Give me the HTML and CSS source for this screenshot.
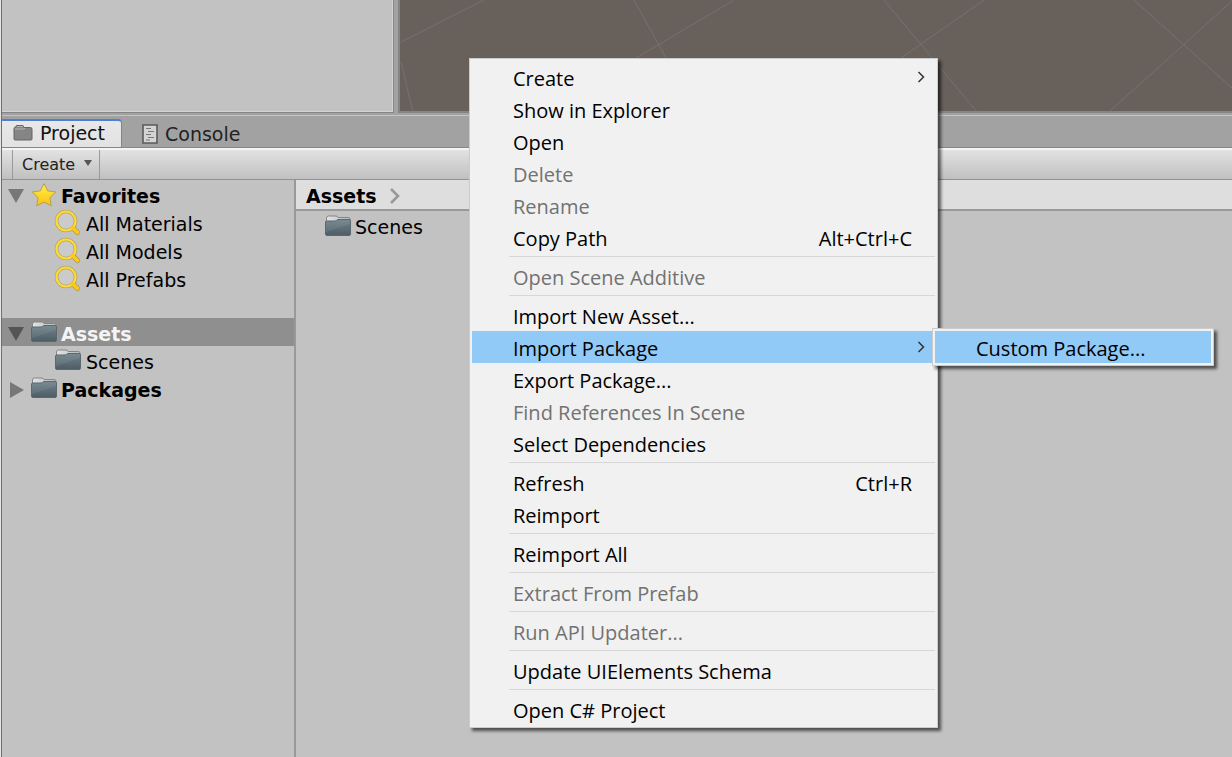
FILE: index.html
```html
<!DOCTYPE html>
<html lang="en">
<head>
<meta charset="utf-8">
<title>Project</title>
<link rel="stylesheet" href="styles.css">
</head>
<body>
<svg class="defs" aria-hidden="true">
  <defs>
    <linearGradient id="folderFill" x1="0" y1="0" x2="0" y2="1"><stop offset="0" stop-color="#6f828a"/><stop offset="1" stop-color="#4d5d65"/></linearGradient>
    <linearGradient id="gold" x1="0" y1="0" x2="0" y2="1"><stop offset="0" stop-color="#fff04a"/><stop offset="1" stop-color="#fdc010"/></linearGradient>
    <linearGradient id="flap" x1="0" y1="0" x2="1" y2="0"><stop offset="0" stop-color="#e4e4e4"/><stop offset="1" stop-color="#b4b8ba"/></linearGradient>
    <symbol id="folder" viewBox="0 0 28 24">
      <path d="M2.500 8V4Q2.500 2 4.500 2H12Q13.500 2 14 3.500H24.500Q26 3.500 26 5V8Z" fill="url(#flap)" stroke="#858585"/>
      <path d="M1.500 8Q1.500 7 3 7H11Q12.500 7 13.500 5.500H25Q26.500 5.500 26.500 7V20Q26.500 21.500 25 21.500H3Q1.500 21.500 1.500 20Z" fill="url(#folderFill)" stroke="#5c686e"/>
      <path d="M2 18L26 10V6H14L11 7.500H2Z" fill="#ffffff" opacity=".07"/>
    </symbol>
    <symbol id="search" viewBox="0 0 28 28">
      <path d="M18.500 18.500L23.500 23.500" stroke="#a8964f" stroke-width="5" stroke-linecap="round"/>
      <circle cx="12" cy="12" r="9.500" fill="#cbcbcb" stroke="#b5a468" stroke-width="3.600"/>
      <circle cx="12" cy="12" r="9.500" fill="none" stroke="#ffdc30" stroke-width="2.200"/>
      <path d="M18.500 18.500L23.500 23.500" stroke="#fdc915" stroke-width="3.800" stroke-linecap="round"/>
    </symbol>
  </defs>
</svg>
<div class="window">
  <div class="top">
    <div class="hierarchy"></div>
    <div class="scene">
      <svg class="grid" width="833" height="112" viewBox="399 0 833 112" aria-hidden="true">
        <path d="M400 42L483 0M400 62L412 112M633 0L665 58M635 58L733 0M883 0L976 112M900 58L983 0M1133 0L1232 89M1108 112L1232 0"/>
      </svg>
    </div>
  </div>
  <div class="tabs" role="tablist">
    <button class="tab active" role="tab" aria-selected="true">
      <svg width="20" height="18" viewBox="0 0 20 18" aria-hidden="true"><path d="M1 15V4.500Q1 3 2.500 3L3.500 1.500H10L11 3.500H17.500Q19 3.500 19 5V15Q19 16 18 16H2Q1 16 1 15Z" fill="#858585" stroke="#666"/><path d="M2 5H11L12 4M4 2.500H10" stroke="#b5b5b5" fill="none"/></svg>
      <span>Project</span>
    </button>
    <button class="tab" role="tab" aria-selected="false">
      <svg width="16" height="20" viewBox="0 0 16 20" aria-hidden="true"><path d="M1 1H15V19H1Z" fill="#d4d4d4" stroke="#5a5a5a" stroke-width="1.600"/><path d="M4 4.500H9M6 7.500H12M4 10.500H9M6 13.500H12M4 16H8" stroke="#777" stroke-width="1.200"/></svg>
      <span>Console</span>
    </button>
  </div>
  <div class="toolbar">
    <button class="create">Create <svg width="8" height="6" viewBox="0 0 8 6" aria-hidden="true"><path d="M0 0H8L4 6Z" fill="#555"/></svg></button>
  </div>
  <div class="main">
    <nav class="tree">
      <div class="row"><svg class="fold" viewBox="0 0 16 14"><path d="M0 0H16L8 14Z"/></svg><svg class="star" viewBox="0 0 26 26"><path d="M13 1.500L16.600 8.800L24.700 10L18.900 15.700L20.200 23.800L13 20L5.800 23.800L7.100 15.700L1.300 10L9.400 8.800Z" fill="url(#gold)" stroke="#b3a24a" stroke-linejoin="round"/></svg><b>Favorites</b></div>
      <div class="row child"><svg class="mag"><use href="#search"/></svg><span>All Materials</span></div>
      <div class="row child"><svg class="mag"><use href="#search"/></svg><span>All Models</span></div>
      <div class="row child"><svg class="mag"><use href="#search"/></svg><span>All Prefabs</span></div>
      <div class="row selected"><svg class="fold" viewBox="0 0 16 14"><path d="M0 0H16L8 14Z"/></svg><svg class="folder"><use href="#folder"/></svg><b>Assets</b></div>
      <div class="row child"><svg class="folder"><use href="#folder"/></svg><span>Scenes</span></div>
      <div class="row"><svg class="fold" viewBox="0 0 16 16"><path d="M2 0L16 8L2 16Z"/></svg><svg class="folder"><use href="#folder"/></svg><b>Packages</b></div>
    </nav>
    <section class="content">
      <div class="crumbs"><b>Assets</b><svg width="12" height="16" viewBox="0 0 12 16" aria-hidden="true"><path d="M2 1L9 8L2 15" fill="none" stroke="#999" stroke-width="2.600"/></svg></div>
      <div class="row asset"><svg class="folder"><use href="#folder"/></svg><span>Scenes</span></div>
    </section>
  </div>
</div>

<div class="menu context" role="menu">
  <button class="item" role="menuitem">Create<svg class="arrow" viewBox="0 0 8 12"><path d="M1.500 1L6.500 6L1.500 11"/></svg></button>
  <button class="item" role="menuitem">Show in Explorer</button>
  <button class="item" role="menuitem">Open</button>
  <button class="item" role="menuitem" disabled>Delete</button>
  <button class="item" role="menuitem" disabled>Rename</button>
  <button class="item" role="menuitem">Copy Path<span class="key">Alt+Ctrl+C</span></button>
  <hr>
  <button class="item" role="menuitem" disabled>Open Scene Additive</button>
  <hr>
  <button class="item" role="menuitem">Import New Asset...</button>
  <button class="item hot" role="menuitem">Import Package<svg class="arrow" viewBox="0 0 8 12"><path d="M1.500 1L6.500 6L1.500 11"/></svg></button>
  <button class="item" role="menuitem">Export Package...</button>
  <button class="item" role="menuitem" disabled>Find References In Scene</button>
  <button class="item" role="menuitem">Select Dependencies</button>
  <hr>
  <button class="item" role="menuitem">Refresh<span class="key">Ctrl+R</span></button>
  <button class="item" role="menuitem">Reimport</button>
  <hr>
  <button class="item" role="menuitem">Reimport All</button>
  <hr>
  <button class="item" role="menuitem" disabled>Extract From Prefab</button>
  <hr>
  <button class="item" role="menuitem" disabled>Run API Updater...</button>
  <hr>
  <button class="item" role="menuitem">Update UIElements Schema</button>
  <hr>
  <button class="item" role="menuitem">Open C# Project</button>
</div>
<div class="menu submenu" role="menu">
  <button class="item hot" role="menuitem">Custom Package...</button>
</div>
</body>
</html>
```

FILE: styles.css
```css
* { box-sizing: border-box; }
body {
  margin: 0;
  background: #e4e4e4;
  font: 19px/28px "DejaVu Sans", sans-serif;
  color: #000;
  overflow: hidden;
}
button { border: 0; margin: 0; background: none; font: inherit; color: inherit; text-align: left; }
svg { display: block; flex: none; }
.defs { position: absolute; width: 0; height: 0; }

.window {
  min-height: 100vh;
  margin-left: 1px;
  border-left: 1px solid #2b82c9;
  display: flex;
  flex-direction: column;
  background: #c2c2c2;
}
.top {
  display: grid;
  grid-template-columns: 392px 1fr;
  column-gap: 4px;
  height: 116px;
  padding-bottom: 2px;
  background: #a2a2a2;
  border-bottom: 1px solid #c0c5c8;
}
.hierarchy { background: #c2c2c2; border: solid #858585; border-width: 0 1px 1px 0; box-shadow: inset -1px -1px #d5d5d5; }
.scene { position: relative; overflow: hidden; background: #68605b; border: solid #858585; border-width: 0 0 2px 2px; }
.grid { position: absolute; left: 0; top: 0; }
.grid path { stroke: #757271; fill: none; }

.tabs { display: flex; align-items: flex-end; height: 32px; padding-top: 3px; background: #a2a2a2; border-bottom: 1px solid #858585; }
.tab { display: flex; align-items: center; gap: 7px; height: 28px; padding: 1px 16px 0 20px; color: #222; }
.tab.active {
  padding: 0 16px 2px 11px;
  background: linear-gradient(#e8e8e8, #e2e2e2);
  border-top: 2px solid #4f80d0;
  border-right: 1px solid #858585;
  border-radius: 0 4px 0 0;
  color: #111;
}

.toolbar {
  height: 32px;
  padding-left: 10px;
  background: linear-gradient(#e2e2e2, #c0c0c0);
  border-top: 2px solid #f4f4f4;
  border-bottom: 1px solid #939393;
  display: flex;
}
.create {
  display: flex;
  align-items: center;
  gap: 9px;
  padding: 0 7px 0 9px;
  font-size: 16px;
  color: #222;
  border: solid #999;
  border-width: 0 1px;
}
.create svg { margin-bottom: 3px; }

.main { flex: 1; display: grid; grid-template-columns: 294px 1fr; }
.tree { border-right: 2px solid #999; }
.row { display: flex; align-items: center; height: 28px; padding: 4px 0 0 6px; }
.child { padding-left: 52px; }
.selected { margin-top: 26px; background: #8f8f8f; color: #f4f4f4; }
.fold { width: 16px; height: 16px; margin-right: 6px; fill: #777; }
.selected .fold { fill: #555; }
.folder { width: 28px; height: 24px; margin: 0 3px 4px 0; }
.child .folder { margin-right: 4px; }
.star { width: 28px; height: 26px; margin: 0 3px 2px 0; }
.mag { width: 28px; height: 28px; margin: 0 4px 3px 0; }

.crumbs { display: flex; align-items: center; gap: 12px; height: 31px; padding: 2px 0 0 10px; background: #dedede; border-bottom: 2px solid #999; }
.asset { height: 32px; padding: 0 0 0 28px; }
.asset .folder { margin-bottom: 2px; }

.menu {
  position: absolute;
  padding: 2px;
  border: 1px solid #ccc;
  background: #f1f1f1;
  box-shadow: 3px 3px 3px rgba(0, 0, 0, .6);
  font: 20px/28px "Open Sans", "Noto Sans", sans-serif;
}
.context { left: 469px; top: 58px; width: 469px; }
.submenu { left: 932px; top: 328px; width: 282px; }
.item {
  display: flex;
  align-items: center;
  width: 100%;
  height: 32px;
  padding: 3px 10px 0 41px;
}
.item:disabled { color: #727272; }
.hot { background: #91c9f7; }
.key { margin-left: auto; padding-right: 13px; }
.arrow { width: 8px; height: 12px; margin: 0 0 4px auto; fill: none; stroke: #333; stroke-width: 1.500; }
.menu hr { height: 1px; margin: 3px 0 3px 37px; border: 0; background: #d7d7d7; }
```
